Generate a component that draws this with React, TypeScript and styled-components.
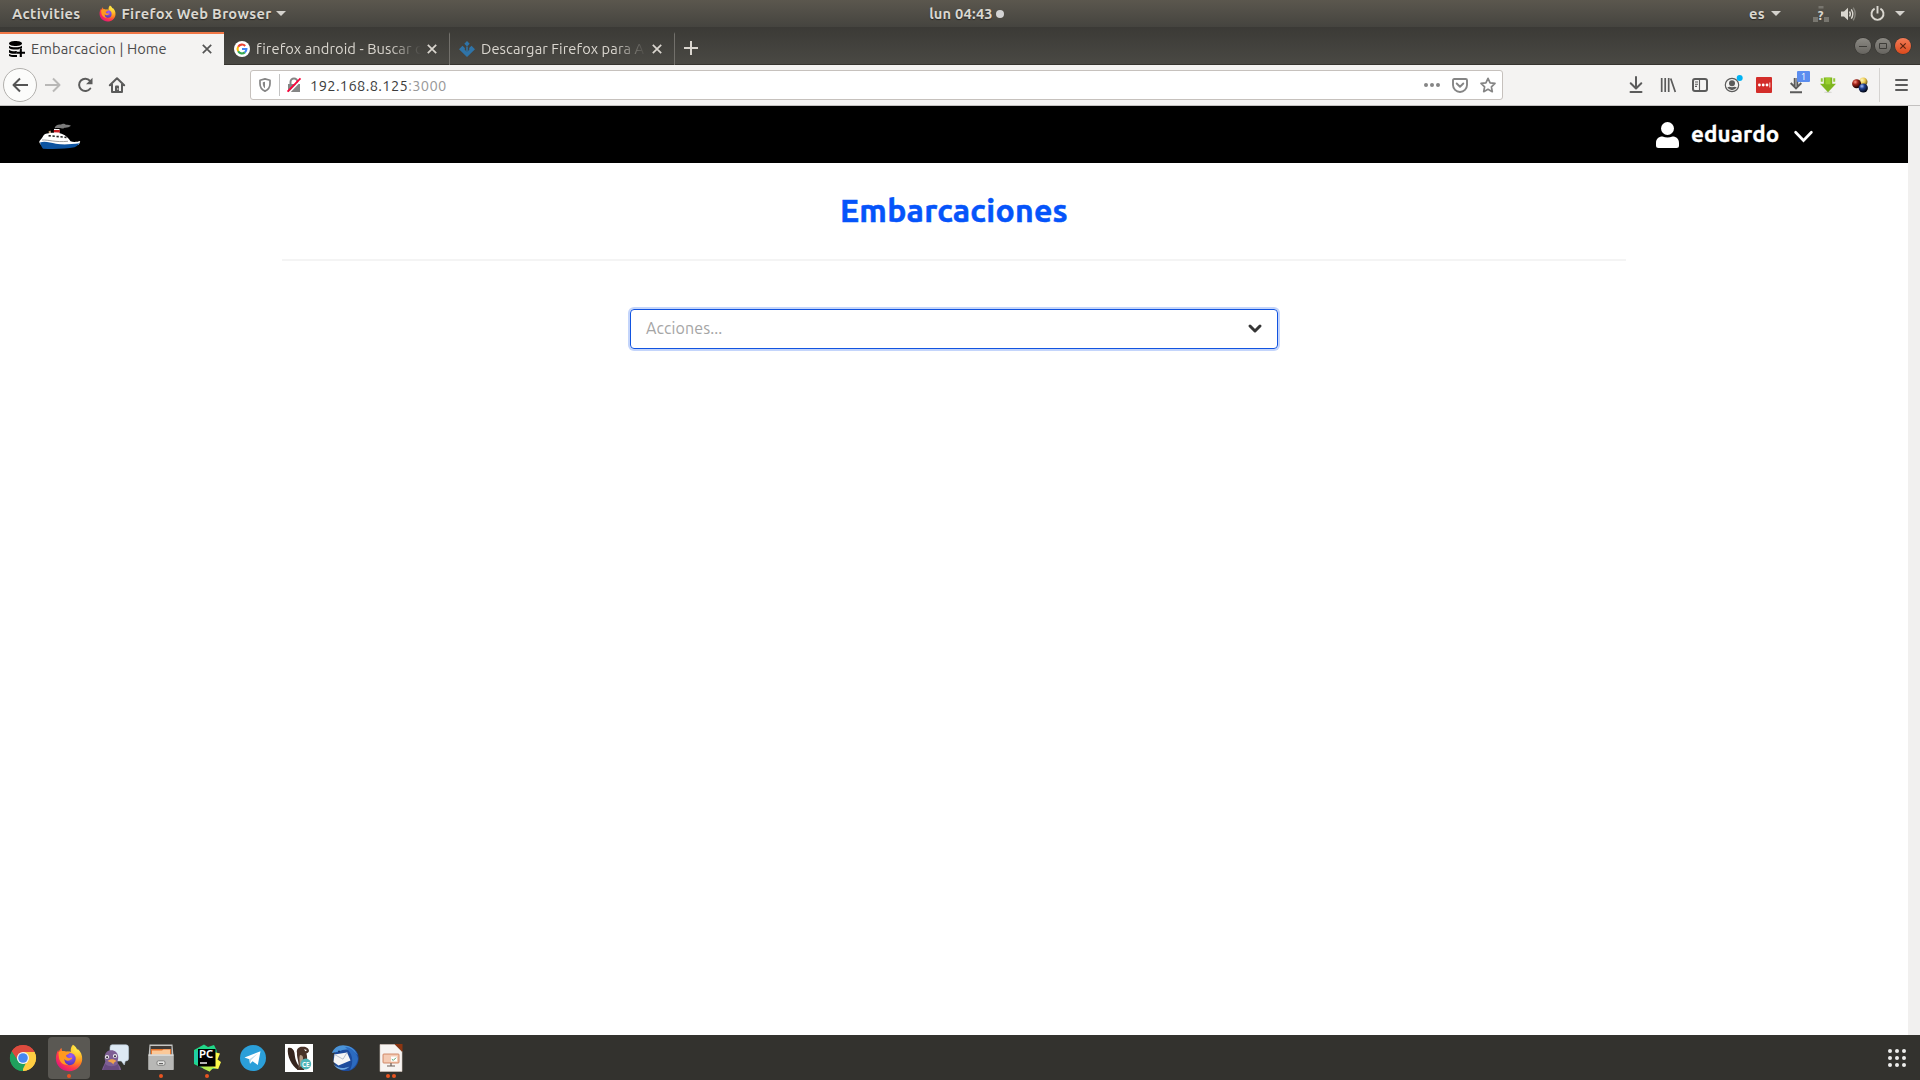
import React from "react";
import styled, { createGlobalStyle, css } from "styled-components";

const GlobalStyle = createGlobalStyle`
  *, *::before, *::after { box-sizing: border-box; }
  html, body { margin: 0; padding: 0; background: #fff; overflow: hidden; }
  body { font-family: "Ubuntu", "Open Sans", "Noto Sans", sans-serif; }
  svg { display: block; overflow: visible; }
`;

const Desktop = styled.div`
  display: flex;
  flex-direction: column;
  width: 1920px;
  height: 1080px;
`;

/* ---------- shared ---------- */

const Icon = styled.svg<{ $gap?: number }>`
  flex: none;
  margin-left: ${(p) => p.$gap ?? 0}px;
`;

const Caret = styled.i<{ $gap?: number }>`
  flex: none;
  width: 0;
  height: 0;
  margin-left: ${(p) => p.$gap ?? 0}px;
  border: 5px solid transparent;
  border-bottom-width: 0;
  border-top-color: #d4d2cd;
`;

/* ---------- GNOME top bar ---------- */

const TopBar = styled.header`
  display: grid;
  grid-template-columns: 1fr auto 1fr;
  flex: none;
  height: 27px;
  color: #dad7d0;
  background: linear-gradient(#5b574e, #45443f);
`;

const BarGroup = styled.div<{ $end?: boolean }>`
  display: flex;
  align-items: center;
  ${(p) =>
    p.$end &&
    css`
      justify-content: flex-end;
      padding-right: 15px;
    `}
`;

const BarText = styled.span<{ $gap?: number; $track: number }>`
  margin-left: ${(p) => p.$gap ?? 0}px;
  padding-top: 1px;
  font-size: 14.67px;
  font-weight: 700;
  line-height: 26px;
  letter-spacing: ${(p) => p.$track}px;
  white-space: nowrap;
  text-shadow: 0 1px 1px rgba(0, 0, 0, 0.5);
`;

const ClockDot = styled.i`
  width: 8px;
  height: 8px;
  margin-left: 3px;
  border-radius: 50%;
  background: #d4d4d4;
`;

/* ---------- tab strip ---------- */

const TabStrip = styled.nav`
  display: flex;
  align-items: flex-end;
  flex: none;
  height: 38px;
  background: linear-gradient(#3b3a36, #4a4944);
  box-shadow: inset 0 -1px #36342f;
`;

const Tab = styled.div<{ $active?: boolean; $width: number; $inset: number }>`
  display: flex;
  align-items: center;
  flex: none;
  width: ${(p) => p.$width}px;
  height: 33px;
  padding: 0 0 2px ${(p) => p.$inset}px;
  color: ${(p) => (p.$active ? "#4c4c4c" : "#dad6cf")};
  background: ${(p) => (p.$active ? "#f4f3f2" : "transparent")};
  border-top: 2px solid ${(p) => (p.$active ? "#f07746" : "transparent")};
  border-right: ${(p) => (p.$active ? "0" : "1px solid #72706b")};
`;

const TabTitle = styled.span<{ $fade?: boolean }>`
  flex: none;
  width: 165px;
  margin-left: 6px;
  font-size: 14.67px;
  line-height: 20px;
  letter-spacing: 0.08px;
  white-space: nowrap;
  ${(p) =>
    p.$fade &&
    css`
      mask-image: linear-gradient(90deg, #000 calc(100% - 32px), transparent);
    `}
`;

const WindowButtons = styled.div`
  display: flex;
  gap: 4px;
  align-self: center;
  margin: 0 9px 0 auto;
`;

const WindowButton = styled.span<{ $close?: boolean }>`
  display: grid;
  place-items: center;
  width: 16px;
  height: 16px;
  border-radius: 50%;
  background: ${(p) =>
    p.$close ? "linear-gradient(#f37c57, #dc4a1c)" : "linear-gradient(#8c8a84, #66645f)"};
  box-shadow: 0 0 0 0.5px #2f2e2a;
`;

/* ---------- navigation toolbar ---------- */

const Toolbar = styled.div`
  display: flex;
  align-items: center;
  flex: none;
  height: 41px;
  padding-left: 3px;
  color: #5b5b5b;
  background: #f4f3f2;
  border-bottom: 1px solid #c3c1c0;
`;

const BackButton = styled.span`
  display: grid;
  place-items: center;
  flex: none;
  width: 34px;
  height: 34px;
  background: #fcfcfb;
  border: 1px solid #b2b0ad;
  border-radius: 50%;
`;

const UrlBar = styled.div`
  display: flex;
  align-items: center;
  flex: none;
  width: 1253px;
  height: 30px;
  margin-left: 125px;
  padding: 0 6px 0 8px;
  color: #858585;
  background: #fff;
  border: 1px solid #c6c1bd;
  border-radius: 3px;
`;

const UrlDivider = styled.i`
  width: 1px;
  height: 22px;
  margin-left: 8px;
  background: #c4c4c4;
`;

const Url = styled.span`
  margin: 0 auto 0 9px;
  padding-top: 1px;
  color: #3c3c3c;
  font-size: 14.67px;
  line-height: 27px;
  letter-spacing: 0.36px;
`;

const Port = styled.span`
  color: #999;
`;

const ToolIcons = styled.div`
  display: flex;
  align-items: center;
  gap: 16px;
  margin-left: 125px;
`;

const Badged = styled.span`
  position: relative;
  width: 16px;
  height: 16px;
`;

const Badge = styled.b`
  position: absolute;
  top: -6px;
  left: 9px;
  width: 13px;
  height: 11px;
  color: #fff;
  background: #5b8def;
  border-radius: 1px;
  font: 400 9px/11px "Open Sans", sans-serif;
  text-align: center;
`;

const ToolDivider = styled.i`
  width: 1px;
  height: 34px;
  margin-left: 11px;
  background: #d5d3d1;
`;

/* ---------- page ---------- */

const Viewport = styled.div`
  display: flex;
  flex: 1;
  min-height: 0;
`;

const Page = styled.main`
  display: flex;
  flex-direction: column;
  align-items: center;
  width: 1908px;
  background: #fff;
`;

const ScrollTrack = styled.div`
  width: 12px;
  background: #f1f0ef;
`;

const SiteHeader = styled.header`
  display: flex;
  align-items: center;
  justify-content: space-between;
  flex: none;
  width: 100%;
  height: 57px;
  padding: 0 95px 0 39px;
  color: #fff;
  background: #000;
`;

const Brand = styled.a`
  padding-top: 3px;
`;

const UserMenu = styled.div`
  display: flex;
  align-items: center;
`;

const UserName = styled.span`
  width: 88px;
  margin: -1px 0 1px 12px;
  font-size: 22.4px;
  font-weight: 700;
  line-height: 30px;
  letter-spacing: 0.13px;
  -webkit-text-stroke: 0.3px;
`;

const Container = styled.section`
  display: flex;
  flex-direction: column;
  align-items: center;
  width: 1344px;
`;

const Title = styled.h1`
  width: 100%;
  margin: 0;
  padding: 26px 0 28px;
  color: #0554fa;
  border-bottom: 2px solid #f4f4f4;
  font-size: 32px;
  font-weight: 700;
  line-height: 42px;
  letter-spacing: 0.25px;
  text-align: center;
  -webkit-text-stroke: 0.5px;
`;

const Select = styled.div`
  display: flex;
  align-items: center;
  justify-content: space-between;
  width: 648px;
  height: 40px;
  margin-top: 48px;
  padding: 0 15px;
  color: #a5a5a5;
  border: 1px solid #1254e0;
  border-radius: 4px;
  box-shadow: 0 0 0 2px #c4d5fb;
  font-size: 16px;
  line-height: 36px;
  letter-spacing: 0.1px;
`;

const Placeholder = styled.span`
  margin-top: -3px;
`;

/* ---------- dock ---------- */

const Dock = styled.footer`
  display: flex;
  align-items: center;
  flex: none;
  height: 45px;
  background: #33322e;
`;

const DockApp = styled.div<{ $active?: boolean }>`
  display: grid;
  grid-template-rows: 37px 4px;
  justify-items: center;
  align-content: start;
  width: 42px;
  height: 42px;
  margin: 0 2px;
  background: ${(p) => (p.$active ? "#5a5853" : "transparent")};
  border-radius: 4px;
`;

const DockIcon = styled.svg`
  width: 28px;
  height: 28px;
  align-self: start;
  margin-top: 7px;
`;

const Running = styled.span`
  display: flex;
  gap: 2px;
`;

const RunDot = styled.i`
  width: 4px;
  height: 4px;
  border-radius: 50%;
  background: #e95420;
`;

const AppGrid = styled.div`
  display: grid;
  grid-template-columns: repeat(3, 4px);
  gap: 3px;
  margin: 1px 14px 0 auto;
`;

const GridDot = styled.i`
  width: 4px;
  height: 4px;
  border-radius: 50%;
  background: #eeeeec;
`;

/* ---------- drawings ---------- */

const FirefoxShapes = () => (
  <>
    <defs>
      <radialGradient id="fxFlame" cx="0.82" cy="0.12" r="1">
        <stop offset="0" stopColor="#fff44f" />
        <stop offset="0.3" stopColor="#ffc42e" />
        <stop offset="0.55" stopColor="#ff8a1e" />
        <stop offset="0.78" stopColor="#ff3a49" />
        <stop offset="1" stopColor="#e0157c" />
      </radialGradient>
      <radialGradient id="fxGlobe" cx="0.6" cy="0.25" r="0.8">
        <stop offset="0" stopColor="#a05cf5" />
        <stop offset="1" stopColor="#4a35b8" />
      </radialGradient>
    </defs>
    <path
      fill="url(#fxFlame)"
      d="M18 .8c2.1 1.1 3.6 3.2 4.1 5 .5-.1.5-.6.4-1.1 3.3 2.8 5 6.6 4.7 10.8C26.800 22 21.200 27.200 14 27.200 6.600 27.200.9 21.700.9 14.600c0-3 .7-5.800 2.300-8.500l.4 2c.5-1.600 1.500-3.200 2.900-4.200l.6 3.300c1.300-.3 2.600-.2 3.900.5 2-.2 3.700-.3 4.800.4-.4-2.900.3-5.500 2.100-7.300z"
    />
    <circle cx="14.500" cy="15" r="6.200" fill="url(#fxGlobe)" />
    <path
      fill="#ff9a20"
      d="M3.600 8.100c1.800-1.500 4.700-1.600 7.400-.4 1.800.2 3.200.2 3.800.8-.2 1.300-1.600 1.600-3.400 2.500-.5.700-.2 1.700 1.100 2.600 1.400.9 2.900.5 4-.1 1 .3.8 1.500-.7 2-2.100 1.900-5 1.600-6.400-.4-.2 2.900 1.400 5 4 5.800-4.600.5-8.400-2.300-9.300-6.400-.4-2.200-.5-4.300-.5-6.400z"
    />
  </>
);

const GoogleIcon = () => (
  <Icon width="16" height="16" viewBox="0 0 16 16">
    <circle cx="8" cy="8" r="8" fill="#fff" />
    <g fill="none" strokeWidth="2.100">
      <path stroke="#ea4335" d="M4.200 5.800A4.400 4.400 0 0 1 11.200 4.900" />
      <path stroke="#fbbc05" d="M4.200 5.700a4.400 4.400 0 0 0 0 4.600" />
      <path stroke="#34a853" d="M4.150 10.200a4.400 4.400 0 0 0 6.700 1.200" />
      <path stroke="#4285f4" d="M8 8h4.400a4.400 4.400 0 0 1-1.600 3.400" />
    </g>
  </Icon>
);

const CloseGlyph = ({ color, gap }: { color: string; gap: number }) => (
  <Icon $gap={gap} width="10" height="10" viewBox="0 0 10 10">
    <path d="M.8.8l8.400 8.400M9.200.8L.8 9.200" stroke={color} strokeWidth="1.700" fill="none" />
  </Icon>
);

const Ship = () => (
  <Icon width="42" height="27" viewBox="0 0 42 27">
    <path d="M15.500 5.500C16 2.500 19 1 22 1.500c1.500-1.500 4-.7 5 .3 2-.2 3.500.2 5 1-1.600 1.600-4.700 2.200-6.500 1.900-1 1-3 1.200-4.500.4-2-.2-3.500-.2-5.500.4z" fill="#7b7b7b" />
    <path d="M15 6h5.500v6H15z" fill="#fff" />
    <path d="M14.800 7h6v2.500h-6z" fill="#c91f26" />
    <path d="M9.500 8.500l2-1 .8 3-2 .8z" fill="#c8a983" />
    <path d="M4.500 12.500C6 10.500 11 9.500 19 10c5 .5 9 3 12.500 8.200 3 1.300 7 .6 9.700-.2-.3 2-1 3.200-2 4L2 21.800c-1.500-1.500-2-3-1.500-3.800 1-1.500 2.700-2.700 4-5.500z" fill="#fff" />
    <path d="M1 19.400c5-1.600 10 .2 16 1.300s14 .8 23.500-.4c-1 1.700-3 3.300-5 3.900-8 1.500-18 2-31.500 1.500C3.300 24.800 1.500 22 1 19.400z" fill="#0c53a0" />
    <path d="M3 17c7-.3 13 2.500 26 1.300" fill="none" stroke="#777" strokeWidth=".7" />
    <path d="M9.500 12.700l18 1.700" stroke="#222" strokeWidth="1.600" strokeDasharray="2.300 1.700" />
  </Icon>
);

const dockApps: { name: string; running: number; active?: boolean; art: React.ReactNode }[] = [
  {
    name: "chrome",
    running: 0,
    art: (
      <>
        <path d="M14 14L2.740 7.500A13 13 0 0 1 25.260 7.500z" fill="#dd4b3e" />
        <path d="M14 14L25.260 7.500A13 13 0 0 1 14 27z" fill="#ffcd42" />
        <path d="M14 14V27A13 13 0 0 1 2.740 7.500z" fill="#1fa15d" />
        <path d="M14 8h11.500a13 13 0 0 1-11.500 19l5.200-10z" fill="#ffcd42" />
        <path d="M2.740 7.500A13 13 0 0 1 25.500 8H14a6 6 0 0 0-5.500 8z" fill="#dd4b3e" />
        <path d="M2.740 7.500L8.800 17a6 6 0 0 0 8 2.300L13 27A13 13 0 0 1 2.740 7.500z" fill="#1fa15d" />
        <circle cx="14" cy="14" r="6.100" fill="#f5f5f5" />
        <circle cx="14" cy="14" r="4.800" fill="#4688f1" />
      </>
    ),
  },
  { name: "firefox", running: 1, active: true, art: <FirefoxShapes /> },
  {
    name: "pidgin",
    running: 0,
    art: (
      <>
        <path d="M11 .8h14q2.600 0 2.600 3v10.500q0 2.700-2.800 2.700h-.5l-1 4-3-4h-6L9 11V3.500Q9 .8 11 .8z" fill="#dde9f4" stroke="#bccddb" strokeWidth=".6" />
        <path d="M1 26c.8-3.500 2.500-5 3.300-8.500C2.500 12 4.500 7 9 6.300c4.500-.6 7.800 2 8.200 6.500.2 2.700-1 4-.5 6.500 1.400 2 3 4 3.400 6.700z" fill="#7e5f94" />
        <path d="M4 20c4 3 9 3 13 0l1.500 6H2z" fill="#694b80" />
        <circle cx="6" cy="13" r="2.100" fill="#eee" />
        <circle cx="14" cy="12" r="2.100" fill="#eee" />
        <circle cx="6.100" cy="13.200" r="1" fill="#332539" />
        <circle cx="14" cy="12.200" r="1" fill="#332539" />
        <path d="M6.500 17c3-2.300 6-2.300 9 0-1.300 1-2.600 1-3.200 3.500-1.400-2.500-3.600-2.300-5.800-3.500z" fill="#f0a24b" />
      </>
    ),
  },
  {
    name: "files",
    running: 1,
    art: (
      <>
        <path d="M2.500.5h23l1 12v13h-25v-13z" fill="#c6c6c4" />
        <path d="M3.500 2h21v9h-21z" fill="#403a36" />
        <path d="M4 5h20v6H4z" fill="#e8752c" />
        <path d="M5 6.500h10l1.500-1H23V11H5z" fill="#fbc999" />
        <path d="M1.500 10.500h25v15.500h-25z" fill="#b8b8b6" />
        <path d="M1.500 10.500h25v1.200h-25z" fill="#e6e6e4" />
        <rect x="10" y="16.800" width="8" height="4.500" rx="1.500" fill="#e4e4e2" stroke="#747472" strokeWidth=".8" />
        <path d="M12 19.600h4" stroke="#555" strokeWidth="1" />
      </>
    ),
  },
  {
    name: "pycharm",
    running: 1,
    art: (
      <>
        <path d="M1 6l10-5.500 4 2.500 6-2 2.500 5 .5 18-9 2L8 23.500 1 20z" fill="#21d789" />
        <path d="M21 8l6 1.500-2.500 6L28 18l-2.800 7-5.700-1-3 3.500L8.500 22z" fill="#fcf84a" />
        <path d="M6 21l15 2-4.500 4.500L11 25z" fill="#b6ee4d" />
        <path d="M1 8l5-2v13l-5-1z" fill="#20cfa5" />
        <path d="M5 5h17.500v17.500H5z" fill="#000" />
        <text x="6" y="13.800" fill="#fff" fontSize="10" fontWeight="700" textLength="14" lengthAdjust="spacingAndGlyphs">PC</text>
        <path d="M7 19h7" stroke="#fff" strokeWidth="1.400" />
      </>
    ),
  },
  {
    name: "telegram",
    running: 0,
    art: (
      <>
        <circle cx="14" cy="14" r="13" fill="#2b9fd9" />
        <path d="M5.500 13.600L21.500 7.200 18.800 21l-5.200-3.800-2.600 2.500-.6-4.500z" fill="#fff" />
        <path d="M10.400 15.200l8.300-5.700-6.500 6.600-1.200 3.600z" fill="#bfdcec" />
      </>
    ),
  },
  {
    name: "dbeaver",
    running: 0,
    art: (
      <>
        <path d="M0 0h28v28H0z" fill="#fff" />
        <path d="M3 4C6 3 9 5 9.500 9c.4 3 .6 8 4.500 13l-1 4C7 22 1.500 12 3 4z" fill="#36251e" />
        <path d="M12 9c-1-4 2-6.500 5.500-6.200C21 2.500 24 4.500 24 7c-.3 1.700-2 2-2.600 2.500C23 14 22 22 19 26h-7c4-5-.5-11 0-17z" fill="#493228" />
        <path d="M15 11c2 0 3 1 3 3 0 5-1 8-3.500 9.500C15.500 19 13.500 15 15 11z" fill="#b49a85" />
        <path d="M19 5.200l3 .8-1.500 1.300z" fill="#fff" />
        <circle cx="20.800" cy="20" r="5.400" fill="#4eb5b9" />
        <text x="17" y="22.700" fill="#fff" fontSize="7" fontWeight="700" textLength="7.500" lengthAdjust="spacingAndGlyphs">CE</text>
      </>
    ),
  },
  {
    name: "thunderbird",
    running: 0,
    art: (
      <>
        <circle cx="15" cy="14.500" r="12.600" fill="#1d4b9c" />
        <path d="M1 9C3 3 9 0 16 1.800c5 1.200 9 5 10.500 9.200C22 5 14 4 8 7.500z" fill="#4a93d8" />
        <path d="M14 3c7 0 12 6 13 12-1 5-4 9-8 11 4-8 3-17-5-23z" fill="#2c6bc0" />
        <path d="M3.500 10.500L16 8.500l3.500 8-12 5L2.500 18z" fill="#f5f5f5" />
        <path d="M3.500 10.500l8.500 4.700 4-6.700" fill="none" stroke="#b9c1cd" strokeWidth="1" />
        <path d="M2.500 20c4 4.500 10 5 16 2.500-3 4-11 5.500-16-2.500z" fill="#6fa8e0" />
        <circle cx="8" cy="7.500" r="1" fill="#122f66" />
      </>
    ),
  },
  {
    name: "impress",
    running: 2,
    art: (
      <>
        <path d="M3 .5h15l7 7v20H3z" fill="#f7f4f2" stroke="#d5c6be" strokeWidth=".6" />
        <path d="M17.500 0h8v8z" fill="#8b3511" />
        <rect x="6" y="10" width="16" height="9" rx=".8" fill="#f4cbb4" stroke="#c8754f" strokeWidth=".8" />
        <path d="M14 12.500h6v5h-6z" fill="#fff" />
        <path d="M14.800 15.200l1.500 1.200 2.700-2.700" stroke="#58a06d" fill="none" strokeWidth="1" />
        <path d="M14 19v2.500M10 22h8" stroke="#6d5c54" strokeWidth="1.200" />
      </>
    ),
  },
];

export default function App() {
  return (
    <Desktop>
      <GlobalStyle />
      <TopBar>
        <BarGroup>
          <BarText $gap={12} $track={0.33}>Activities</BarText>
          <Icon $gap={18} width="17" height="17" viewBox="0 0 28 28">
            <FirefoxShapes />
          </Icon>
          <BarText $gap={6} $track={0.32}>Firefox Web Browser</BarText>
          <Caret $gap={4} />
        </BarGroup>
        <BarGroup>
          <BarText $gap={13} $track={0.22}>lun 04:43</BarText>
          <ClockDot />
        </BarGroup>
        <BarGroup $end>
          <BarText $track={0.3}>es</BarText>
          <Caret $gap={6} />
          <Icon $gap={32} width="16" height="16" viewBox="0 0 16 16">
            <path d="M0 11h5v5H0zM11 11h5v5h-5zM5.500 0h5v2.500h-5z" fill="#78766f" />
            <text x="4.800" y="13.500" fill="#dad7d0" fontSize="13" fontWeight="700">?</text>
          </Icon>
          <Icon $gap={12} width="16" height="14" viewBox="0 0 16 14">
            <path d="M0 4.500h3L7 .7v12.600L3 9.500H0z" fill="#dad7d0" />
            <path d="M8.500 4.500q1.700 2.500 0 5M10.300 2.300q3 4.700 0 9.400" stroke="#dad7d0" strokeWidth="1.400" fill="none" />
            <path d="M12.200.7q4 6.300 0 12.600" stroke="#85837c" strokeWidth="1.400" fill="none" />
          </Icon>
          <Icon $gap={13} width="15" height="15" viewBox="0 0 15 15">
            <path d="M4.600 2.600a6 6 0 1 0 5.800 0M7.500 0v7.500" stroke="#dad7d0" strokeWidth="1.900" fill="none" />
          </Icon>
          <Caret $gap={10} />
        </BarGroup>
      </TopBar>

      <TabStrip>
        <Tab $active $width={224} $inset={8}>
          <Icon width="17" height="16" viewBox="0 0 17 16">
            <path d="M1 2.500C1 .9 3.900 0 7.500 0S14 .9 14 2.500 11.100 5 7.500 5 1 4.100 1 2.500z" />
            <path d="M1 4.700c2.500 2 10.500 2 13 0V7c-2 2-11 2-13 0zM1 8.700c2 1.500 5 1.700 8 1.400v2.600c-4 .4-7-.1-8-1.200zM1 12.900c2 1.100 5 1.300 8 1.100V16c-4 .2-7.500-.3-8-1.300z" />
            <path d="M12.800 7.700v8M8.800 11.700h8" stroke="#f4f3f2" strokeWidth="3.600" />
            <path d="M12.800 7.500v8.500M8.800 11.700H17" stroke="#000" strokeWidth="2.100" />
          </Icon>
          <TabTitle>Embarcacion | Home</TabTitle>
          <CloseGlyph color="#555" gap={6} />
        </Tab>
        <Tab $width={226} $inset={10}>
          <GoogleIcon />
          <TabTitle $fade>firefox android - Buscar c</TabTitle>
          <CloseGlyph color="#dad6cf" gap={6} />
        </Tab>
        <Tab $width={225} $inset={9}>
          <Icon width="16" height="16" viewBox="0 0 16 16">
            <path d="M8 0l2.700 2.700L8 5.400 5.300 2.700zM3.500 4.700l2.300 2.300v2L8 10.500 10.200 9V7l2.300-2.300L16 8.200 8 16 0 8.200z" fill="#2f74a8" />
            <path d="M8 5.500v4.500" stroke="#2f74a8" strokeWidth="1.500" />
          </Icon>
          <TabTitle $fade>Descargar Firefox para A</TabTitle>
          <CloseGlyph color="#dad6cf" gap={6} />
        </Tab>
        <Icon $gap={9} width="14" height="33" viewBox="0 0 14 33">
          <path d="M0 16h14M7 9v14" stroke="#dad6cf" strokeWidth="2" />
        </Icon>
        <WindowButtons>
          <WindowButton>
            <svg width="10" height="10"><path d="M1 5.500h8" stroke="#3d3c38" /></svg>
          </WindowButton>
          <WindowButton>
            <svg width="10" height="10"><path d="M1.500 2.500h7v5h-7z" stroke="#3d3c38" fill="none" /></svg>
          </WindowButton>
          <WindowButton $close>
            <svg width="10" height="10"><path d="M2.300 2.300l5.400 5.400M7.700 2.300L2.300 7.700" stroke="#5c2411" strokeWidth="1.200" /></svg>
          </WindowButton>
        </WindowButtons>
      </TabStrip>

      <Toolbar>
        <BackButton>
          <svg width="16" height="16" viewBox="0 0 16 16">
            <path d="M16 8H1.500M8 1.500L1.500 8 8 14.500" stroke="#555" strokeWidth="2" fill="none" strokeLinejoin="round" />
          </svg>
        </BackButton>
        <Icon $gap={8} width="16" height="16" viewBox="0 0 16 16">
          <path d="M0 8h14.500M8 1.500L14.500 8 8 14.500" stroke="#b9b8b7" strokeWidth="2" fill="none" strokeLinejoin="round" />
        </Icon>
        <Icon $gap={16} width="16" height="16" viewBox="0 0 16 16">
          <path d="M13 3.800A6.200 6.200 0 1 0 13.300 11.500" stroke="#5b5b5b" strokeWidth="2" fill="none" strokeLinecap="round" />
          <path d="M15.500.7v6.600H9z" fill="#5b5b5b" />
        </Icon>
        <Icon $gap={16} width="16" height="16" viewBox="0 0 16 16">
          <path d="M.8 8.300L8 1.200l7.200 7.100M3 7.200V15h10V7.200" stroke="#5b5b5b" strokeWidth="2" fill="none" strokeLinejoin="round" strokeLinecap="round" />
          <path d="M6 15V9.500q0-1 1-1h2q1 0 1 1V15z" fill="#5b5b5b" />
          <circle cx="8.800" cy="12" r=".7" fill="#f4f3f2" />
        </Icon>
        <UrlBar>
          <Icon width="12" height="14" viewBox="0 0 12 14">
            <path d="M6 .9l5 1.300v3.600c0 3.400-1.800 5.900-5 7.300-3.200-1.400-5-3.900-5-7.300V2.200z" stroke="#858585" strokeWidth="1.700" fill="none" strokeLinejoin="round" />
            <path d="M6 3.800v6.400c-1.500-1-2.200-2.600-2.200-4.500v-1.400z" fill="#858585" />
          </Icon>
          <UrlDivider />
          <Icon $gap={7} width="14" height="14" viewBox="0 0 14 14">
            <path d="M1 6h12v8H1z" fill="#858585" />
            <path d="M3.500 7V4a3.500 3.500 0 0 1 7 0v3" stroke="#858585" strokeWidth="2" fill="none" />
            <path d="M1.800 15L14.800 1.500" stroke="#fff" strokeWidth="1.500" />
            <path d="M.5 13.700L13.500.3" stroke="#ff0039" strokeWidth="1.700" />
          </Icon>
          <Url>
            192.168.8.125<Port>:3000</Port>
          </Url>
          <Icon width="16" height="4" viewBox="0 0 16 4">
            <g fill="#858585"><circle cx="2" cy="2" r="2" /><circle cx="8" cy="2" r="2" /><circle cx="14" cy="2" r="2" /></g>
          </Icon>
          <Icon $gap={12} width="16" height="15" viewBox="0 0 16 15">
            <path d="M2.300 1h11.400Q15 1 15 2.300V7A7 7 0 0 1 1 7V2.300Q1 1 2.300 1z" stroke="#858585" strokeWidth="1.900" fill="none" />
            <path d="M4.700 5.500L8 8.700l3.300-3.200" stroke="#858585" strokeWidth="1.900" fill="none" strokeLinecap="round" strokeLinejoin="round" />
          </Icon>
          <Icon $gap={12} width="16" height="16" viewBox="0 0 16 16">
            <path d="M8 1.300l2.100 4.500 4.900.6-3.600 3.400.9 4.900L8 12.300l-4.300 2.400.9-4.900L1 6.400l4.900-.6z" stroke="#858585" strokeWidth="1.700" fill="none" strokeLinejoin="round" />
          </Icon>
        </UrlBar>
        <ToolIcons>
          <Icon width="16" height="16" viewBox="0 0 16 16">
            <path d="M8 0v11M2.700 6.200L8 11.500l5.300-5.300M2.500 15h11" stroke="#5b5b5b" strokeWidth="2" fill="none" strokeLinecap="round" strokeLinejoin="round" />
          </Icon>
          <Icon width="16" height="16" viewBox="0 0 16 16">
            <path d="M1.700 1v14M5.200 1v14M8.700 1v14M10.700 1.500L15.300 15" stroke="#5b5b5b" strokeWidth="1.700" fill="none" />
          </Icon>
          <Icon width="16" height="16" viewBox="0 0 16 16">
            <rect x="1" y="2" width="14" height="12" rx="2" stroke="#5b5b5b" strokeWidth="2" fill="none" />
            <path d="M7.500 2v12M3 5h3M3 7.200h3M3 9.400h2" stroke="#5b5b5b" strokeWidth="1.100" fill="none" />
          </Icon>
          <Icon width="16" height="16" viewBox="0 0 16 16">
            <circle cx="8" cy="8" r="6.700" stroke="#5b5b5b" strokeWidth="1.200" fill="none" />
            <circle cx="8" cy="6.300" r="3" fill="#5b5b5b" />
            <path d="M3.300 10.300Q5.500 9 8 10.300q2.500-1.300 4.700 0a5.300 5.300 0 0 1-9.400 0z" fill="#5b5b5b" />
            <circle cx="15.700" cy="1" r="3" fill="#00b3f4" />
          </Icon>
          <Icon width="16" height="16" viewBox="0 0 16 16">
            <rect width="16" height="16" rx="1" fill="#d32d2a" />
            <g fill="#fff"><circle cx="3.400" cy="8" r="1.400" /><circle cx="7.200" cy="8" r="1.400" /><circle cx="11" cy="8" r="1.400" /></g>
            <path d="M13.800 5.500v5" stroke="#fbd5d4" />
          </Icon>
          <Badged>
            <svg width="16" height="16" viewBox="0 0 16 16">
              <path d="M6.700 1v9.500M9.300 1v9.500M2.700 6L8 11.500 13.300 6M2 15.200h12" stroke="#5b5b5b" strokeWidth="1.900" fill="none" />
            </svg>
            <Badge>1</Badge>
          </Badged>
          <Icon width="16" height="16" viewBox="0 0 16 16">
            <ellipse cx="8" cy="15.300" rx="4" ry=".8" fill="#d6d6d3" />
            <path d="M3.800.5h8.400v6.300H16L8 15.300 0 6.800h3.800z" fill="#7fb61f" />
            <path d="M.8 1.200h2v3.500h-2zM13.200 1.200h2v3.500h-2z" fill="#93c83a" />
            <path d="M5.500.8h5v6.500h-5z" fill="#9ad02f" />
          </Icon>
          <Icon width="16" height="16" viewBox="0 0 16 16">
            <defs>
              <radialGradient id="ballY" cx=".35" cy=".3" r=".75"><stop offset="0" stopColor="#fff7c0" /><stop offset=".5" stopColor="#ecc94d" /><stop offset="1" stopColor="#5e4a10" /></radialGradient>
              <radialGradient id="ballR" cx=".35" cy=".3" r=".7"><stop offset="0" stopColor="#ff9a88" /><stop offset=".4" stopColor="#a3231a" /><stop offset="1" stopColor="#100" /></radialGradient>
              <radialGradient id="ballB" cx=".35" cy=".3" r=".7"><stop offset="0" stopColor="#a5c1ff" /><stop offset=".4" stopColor="#20408f" /><stop offset="1" stopColor="#000410" /></radialGradient>
            </defs>
            <circle cx="11.200" cy="4.800" r="4.300" fill="url(#ballY)" />
            <circle cx="4.600" cy="6.800" r="4.500" fill="url(#ballR)" />
            <circle cx="11.300" cy="11" r="4.600" fill="url(#ballB)" />
          </Icon>
        </ToolIcons>
        <ToolDivider />
        <Icon $gap={15} width="13" height="12" viewBox="0 0 13 12">
          <path d="M1 1h11M1 6h11M1 11h11" stroke="#5b5b5b" strokeWidth="2" strokeLinecap="round" />
        </Icon>
      </Toolbar>

      <Viewport>
        <Page>
          <SiteHeader>
            <Brand>
              <Ship />
            </Brand>
            <UserMenu>
              <Icon width="23" height="26" viewBox="0 0 23 26">
                <circle cx="11.500" cy="6.500" r="6.500" fill="#fff" />
                <path d="M6.500 14.500q5 2 10 0c4 0 6.500 2.500 6.500 6.500v2.500q0 2.500-2.500 2.500h-18Q0 26 0 23.500V21c0-4 2.500-6.500 6.500-6.500z" fill="#fff" />
              </Icon>
              <UserName>eduardo</UserName>
              <Icon $gap={15} width="19" height="12" viewBox="0 0 19 12">
                <path d="M1.600 1.800L9.500 10l7.900-8.200" stroke="#fff" strokeWidth="2.700" fill="none" strokeLinecap="round" transform="translate(0 1.500)" />
              </Icon>
            </UserMenu>
          </SiteHeader>
          <Container>
            <Title>Embarcaciones</Title>
            <Select>
              <Placeholder>Acciones...</Placeholder>
              <Icon width="14" height="10" viewBox="0 0 14 10">
                <path d="M2 2l5 5 5-5" stroke="#363636" strokeWidth="3" fill="none" strokeLinecap="round" strokeLinejoin="round" />
              </Icon>
            </Select>
          </Container>
        </Page>
        <ScrollTrack />
      </Viewport>

      <Dock>
        {dockApps.map((app) => (
          <DockApp key={app.name} $active={app.active}>
            <DockIcon viewBox="0 0 28 28">{app.art}</DockIcon>
            <Running>
              {Array.from({ length: app.running }, (_, i) => (
                <RunDot key={i} />
              ))}
            </Running>
          </DockApp>
        ))}
        <AppGrid>
          {Array.from({ length: 9 }, (_, i) => (
            <GridDot key={i} />
          ))}
        </AppGrid>
      </Dock>
    </Desktop>
  );
}
